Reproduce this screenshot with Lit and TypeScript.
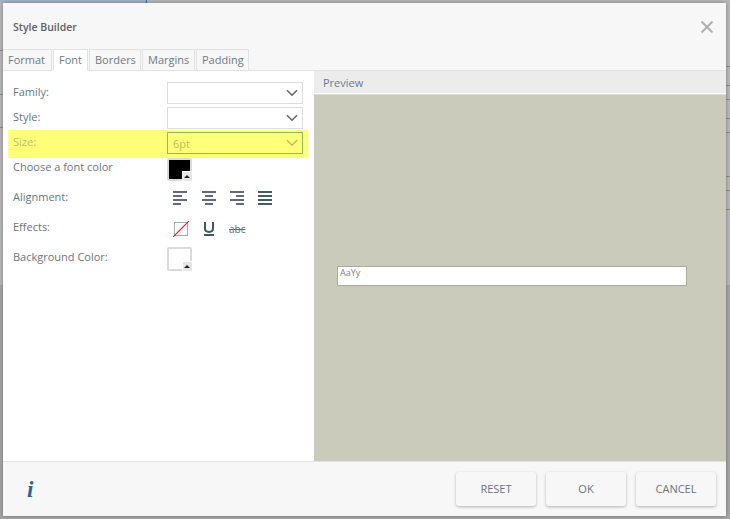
import { LitElement, html, css, svg } from "lit";
import { customElement } from "lit/decorators.js";

const chevron = svg`<svg class="chev" width="12" height="8" viewBox="0 0 12 8"><path d="M1 1.2 6 6.2 11 1.2" fill="none" stroke="currentColor" stroke-width="1.6"/></svg>`;

const bars = (rows: [number, number][], cls: string) => html`<svg class=${cls} width="14" height="14" viewBox="0 0 14 14">
  ${rows.map(([x, w], i) => svg`<rect x=${x} y=${i * 4} width=${w} height="2" fill="currentColor"/>`)}
</svg>`;

@customElement("app-root")
export class AppRoot extends LitElement {
  static styles = css`
    :host {
      display: block;
      width: 730px;
      height: 519px;
      padding: 3px 4px 3px 3px;
      box-sizing: border-box;
      overflow: hidden;
      font-family: "Open Sans", "Liberation Sans", sans-serif;
      font-size: 11px;
      color: #6b7480;
      background:
        linear-gradient(#2f6db0, #2f6db0) 146px 0 / 1px 3px no-repeat,
        linear-gradient(#8e8e84, #8e8e84) 726px 66px / 4px 1px no-repeat,
        linear-gradient(#8e8e84, #8e8e84) 726px 85px / 4px 1px no-repeat,
        linear-gradient(#8e8e84, #8e8e84) 726px 99px / 4px 1px no-repeat,
        linear-gradient(#8e8e84, #8e8e84) 726px 118px / 4px 1px no-repeat,
        linear-gradient(#8e8e84, #8e8e84) 726px 132px / 4px 1px no-repeat,
        linear-gradient(#8e8e84, #8e8e84) 726px 176px / 4px 1px no-repeat,
        linear-gradient(#8e8e84, #8e8e84) 726px 190px / 4px 1px no-repeat,
        linear-gradient(#8e8e84, #8e8e84) 726px 209px / 4px 1px no-repeat,
        linear-gradient(#8e8e84, #8e8e84) 0 50px / 3px 1px no-repeat,
        linear-gradient(#8e8e84, #8e8e84) 0 94px / 3px 1px no-repeat,
        linear-gradient(#8e8e84, #8e8e84) 0 127px / 3px 1px no-repeat,
        linear-gradient(90deg, #a3b3c6, #a3b3c6) 0 0 / 146px 3px no-repeat,
        linear-gradient(#b9b9b9 0, #b9b9b9 285px, #a6a6a6 285px, #a6a6a6 100%);
    }
    .dialog {
      width: 723px;
      height: 513px;
      display: flex;
      flex-direction: column;
      background: #f7f7f7;
      box-shadow: 0 0 4px rgba(0, 0, 0, 0.35);
    }
    .head {
      height: 46px;
      flex: none;
      display: flex;
      align-items: center;
      justify-content: space-between;
      padding: 1px 12px 0 10px;
      box-sizing: border-box;
    }
    .title {
      font-weight: 600;
      font-size: 10.5px;
      color: #5c6066;
    }
    .close { display: block; }
    .tabs {
      height: 22px;
      flex: none;
      display: flex;
      gap: 1px;
      padding-right: 0;
      border-bottom: 1px solid #e2e2e2;
      box-sizing: border-box;
    }
    .tab {
      padding: 0 5px;
      height: 22px;
      box-sizing: border-box;
      border: 1px solid #e2e2e2;
      border-left-width: 1px;
      line-height: 20px;
      color: #6f7a88;
      font-size: 11px;
      white-space: nowrap;
    }
    .tab.first { border-left: 0; padding-left: 5px; width: 49px; }
    .tab.active { background: #fff; border-bottom-color: #fff; width: 35px; }
    .tab.b { width: 52px; }
    .tab.m { width: 53px; }
    .tab.p { width: 53px; }
    .body { flex: 1; display: flex; min-height: 0; }
    .left {
      width: 311px;
      flex: none;
      background: #fff;
      padding: 9px 6px 0 5px;
      box-sizing: border-box;
    }
    .row {
      display: grid;
      grid-template-columns: 154px 136px;
      padding: 0 5px;
      height: 25px;
    }
    .row.size { height: 28px; background: #ffff78; color: #bdbd62; }
    .row.pick { height: 27px; }
    .row.tall { height: 30px; }
    .row label { line-height: 24px; }
    .row.pick label { line-height: 18px; }
    .select {
      margin-top: 2px;
      height: 22px;
      border: 1px solid #dcdcdc;
      box-sizing: border-box;
      display: flex;
      align-items: center;
      justify-content: space-between;
      padding: 0 4px 0 5px;
      color: #666;
      background: #fff;
    }
    .row.size .select {
      border-color: #92b566;
      background: #ffff78;
      color: #bdbd62;
    }
    .swatch {
      position: relative;
      width: 25px;
      height: 23px;
      border: 2px solid #dadada;
      border-radius: 2px;
      box-sizing: border-box;
      background: #fff;
      padding: 0;
    }
    .swatch.bg { height: 24px; margin-top: 2px; }
    .fill { width: 100%; height: 100%; background: #000; }
    .corner {
      position: absolute;
      right: -2px;
      bottom: -2px;
      width: 10px;
      height: 10px;
      background: #e6e6e6;
      border-left: 1px solid #fff;
      border-top: 1px solid #fff;
      box-sizing: border-box;
    }
    .corner::after {
      content: "";
      position: absolute;
      left: 1px;
      top: 3px;
      border: 3px solid transparent;
      border-top: 0;
      border-bottom: 3px solid #222;
    }
    .icons { display: flex; align-items: flex-start; padding-top: 6px; padding-left: 6px; }
    .a1 { color: #5f6c80; margin-right: 15px; display: block; }
    .a2 { color: #5f6c80; margin-right: 14px; display: block; }
    .a3 { color: #5f6c80; margin-right: 14px; display: block; }
    .a4 { color: #435b69; display: block; }
    .fx { display: block; }
    .gap { margin-left: 14px; }
    .abc {
      margin-left: 14px;
      font-size: 10px;
      line-height: 16px;
      color: #5a6d78;
      text-decoration: line-through;
      font-weight: 400;
    }
    .right { flex: 1; display: flex; flex-direction: column; min-width: 0; }
    .prev-head {
      height: 23px;
      flex: none;
      background: #ececec;
      border-bottom: 1px solid #fff;
      box-sizing: border-box;
      padding-left: 9px;
      line-height: 24px;
      color: #6f7a88;
    }
    .prev {
      flex: 1;
      background: #cbcbbb;
      border-top: 1px solid #dcdcd4;
      display: flex;
      align-items: flex-start;
      padding: 171px 0 0 23px;
      box-sizing: border-box;
    }
    .sample {
      width: 350px;
      height: 20px;
      background: #fff;
      border: 1px solid #a9ad98;
      box-sizing: border-box;
      font-size: 9px;
      line-height: 11px;
      padding-left: 2px;
      color: #77818c;
    }
    .foot {
      height: 55px;
      flex: none;
      border-top: 1px solid #e2e2e2;
      box-sizing: border-box;
      display: flex;
      align-items: flex-start;
      justify-content: space-between;
      padding: 10px 10px 0 24px;
    }
    .info {
      font: italic bold 23px "Liberation Serif", serif;
      color: #1c6a9e;
      line-height: 35px;
    }
    .btns { display: flex; gap: 10px; }
    .btn {
      width: 80px;
      height: 34px;
      border-radius: 3px;
      background: #f7f7f7;
      box-shadow: 0 1px 3px rgba(0, 0, 0, 0.28);
      text-align: center;
      line-height: 34px;
      font-size: 11px;
      color: #6b7480;
    }
  `;

  render() {
    return html`
      <div class="dialog">
        <div class="head">
          <div class="title">Style Builder</div>
          <svg class="close" width="14" height="14" viewBox="0 0 14 14"><path d="M1.5 1.5 12.5 12.5M12.5 1.5 1.5 12.5" stroke="#b2b2b2" stroke-width="2.2" fill="none"/></svg>
        </div>
        <div class="tabs">
          <div class="tab first">Format</div>
          <div class="tab active">Font</div>
          <div class="tab b">Borders</div>
          <div class="tab m">Margins</div>
          <div class="tab p">Padding</div>
        </div>
        <div class="body">
          <div class="left">
            <div class="row"><label>Family:</label><div class="select"><span></span>${chevron}</div></div>
            <div class="row"><label>Style:</label><div class="select"><span></span>${chevron}</div></div>
            <div class="row size"><label>Size:</label><div class="select"><span>6pt</span>${chevron}</div></div>
            <div class="row pick"><label>Choose a font color</label><div class="swatch"><div class="fill"></div><div class="corner"></div></div></div>
            <div class="row tall"><label>Alignment:</label>
              <div class="icons">
                ${bars([[0, 14], [0, 9], [0, 14], [0, 8]], "a1")}
                ${bars([[0, 14], [3, 8], [0, 14], [3, 8]], "a2")}
                ${bars([[0, 14], [6, 8], [0, 14], [6, 8]], "a3")}
                ${bars([[0, 14], [0, 14], [0, 14], [0, 14]], "a4")}
              </div>
            </div>
            <div class="row tall"><label>Effects:</label>
              <div class="icons">
                <svg class="fx" width="16" height="16" viewBox="0 0 16 16"><rect x="1.5" y="1.5" width="13" height="13" fill="none" stroke="#ababab"/><path d="M0 16 16 0" stroke="#d8203a" stroke-width="1.2"/></svg>
                <svg class="fx gap" width="12" height="16" viewBox="0 0 12 16"><path d="M2 1V7.5C2 12 10 12 10 7.5V1" fill="none" stroke="#3f5866" stroke-width="2"/><rect x="1" y="13" width="10" height="2" fill="#3f5866"/></svg>
                <span class="abc">abc</span>
              </div>
            </div>
            <div class="row tall"><label>Background Color:</label><div class="swatch bg"><div class="corner"></div></div></div>
          </div>
          <div class="right">
            <div class="prev-head">Preview</div>
            <div class="prev"><div class="sample">AaYy</div></div>
          </div>
        </div>
        <div class="foot">
          <div class="info">i</div>
          <div class="btns">
            <div class="btn">RESET</div>
            <div class="btn">OK</div>
            <div class="btn">CANCEL</div>
          </div>
        </div>
      </div>
    `;
  }
}
